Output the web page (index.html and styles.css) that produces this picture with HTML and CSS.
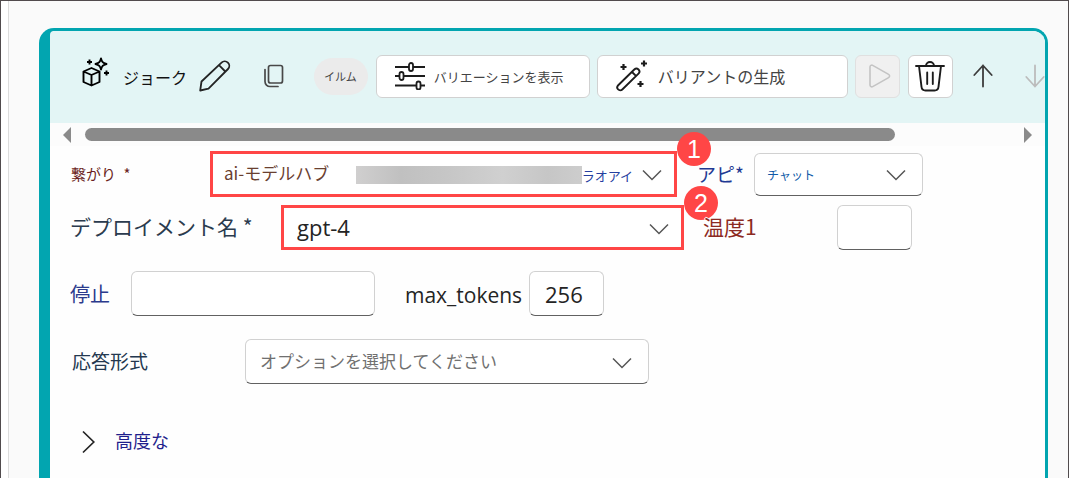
FILE: index.html
```html
<!DOCTYPE html>
<html lang="ja">
<head>
<meta charset="utf-8">
<title>ジョーク</title>
<link rel="stylesheet" href="styles.css">
</head>
<body>
<main class="frame">
  <section class="card">
    <header class="toolbar">
      <svg class="icon-model" width="28" height="30" viewBox="0 0 28 30" fill="none" stroke="#000" stroke-width="1.9" stroke-linejoin="round">
        <path d="M9.500 11 17.500 14.500v10.500L9.500 28.500 1.500 25V14.500ZM1.500 14.500l8 3.500 8-3.500M9.500 18v10.500"/>
        <path d="M19 1.500c.8 3.500 1.800 4.500 5.500 5.500-3.700 1-4.700 2-5.500 5.500-.8-3.500-1.800-4.500-5.500-5.500 3.700-1 4.700-2 5.500-5.500Z"/>
        <path d="M7.500 2.500v5M5 5h5M24.500 13.500v5M22 16h5"/>
      </svg>
      <h1 class="title">ジョーク</h1>
      <button class="plain plain-edit" aria-label="名前を編集">
        <svg width="32" height="32" viewBox="0 0 32 32" fill="none" stroke="#242424" stroke-width="1.8" stroke-linejoin="round"><path d="M1.200 30.500 2.500 21.500 22.500 2.700a4.500 4.500 0 0 1 6.500 6.300L9.500 28.700ZM20 5.200l6.300 6.300"/></svg>
      </button>
      <button class="plain plain-copy" aria-label="コピー">
        <svg width="22" height="24" viewBox="0 0 22 24" fill="none" stroke="#484848" stroke-width="1.7" stroke-linecap="round"><rect x="5.500" y="1.500" width="14" height="17.500" rx="2"/><path d="M2 5.500v12a5 5 0 0 0 5 5h8"/></svg>
      </button>
      <span class="chip">イルム</span>
      <button class="btn btn-show">
        <svg width="30" height="28" viewBox="0 0 30 28" fill="none" stroke="#1c1c1c" stroke-width="1.800"><path d="M0 5h14M18 5h12M0 14h4M9 14h21M0 23.500h21M26 23.500h4"/><rect x="14" y="1" width="4" height="8" rx="2"/><rect x="4.500" y="10" width="4" height="8" rx="2"/><rect x="21.500" y="19.500" width="4" height="8" rx="2"/></svg>
        <span>バリエーションを表示</span>
      </button>
      <button class="btn btn-generate">
        <svg width="32" height="32" viewBox="0 0 32 32" fill="none" stroke="#1c1c1c" stroke-width="1.900"><path d="M2.200 25.300 18.300 9.500a2.900 2.900 0 0 1 4.200 4.200L6.300 29.500a2.900 2.900 0 0 1-4.100-4.200ZM16 12l4.200 4.200"/><path stroke-width="2.200" d="M7.500 4v6M4.500 7h6M28 .5v6M25 3.500h6M24.500 21v6M21.500 24h6"/></svg>
        <span>バリアントの生成</span>
      </button>
      <button class="btn btn-square" disabled aria-label="実行">
        <svg class="icon-play" width="24" height="26" viewBox="0 0 24 26" fill="none" stroke="#c4c4c4" stroke-width="1.600" stroke-linejoin="round"><path d="M2 4a1.800 1.800 0 0 1 2.700-1.600L20.600 11.400a1.800 1.800 0 0 1 0 3.200L4.700 23.600A1.800 1.800 0 0 1 2 22Z"/></svg>
      </button>
      <button class="btn btn-square btn-delete" aria-label="削除">
        <svg width="30" height="32" viewBox="0 0 30 32" fill="none" stroke="#1c1c1c" stroke-width="1.900" stroke-linecap="round"><path d="M1 6h28M11 6a4 4 0 0 1 8 0M4 6l2.500 20.800A4 4 0 0 0 10.500 30.500h9a4 4 0 0 0 4-3.700L26 6M12.200 12.500v11.500M17.800 12.500v11.500"/></svg>
      </button>
      <button class="plain plain-up" aria-label="上へ移動">
        <svg width="20" height="24" viewBox="0 0 20 24" fill="none" stroke="#3c3c3c" stroke-width="1.800" stroke-linecap="round" stroke-linejoin="round"><path d="M10 22.500v-21M1.300 11 10 1.500 18.700 11"/></svg>
      </button>
      <button class="plain plain-down" disabled aria-label="下へ移動">
        <svg width="20" height="24" viewBox="0 0 20 24" fill="none" stroke="#bcbcbc" stroke-width="1.800" stroke-linecap="round" stroke-linejoin="round"><path d="M10 1.500v21M1.300 13 10 22.500 18.700 13"/></svg>
      </button>
    </header>
    <div class="scroller">
      <svg width="8" height="16" viewBox="0 0 8 16" fill="#8a8a8a"><path d="M8 0v16L0 8Z"/></svg>
      <div class="track"><div class="thumb"></div></div>
      <svg width="8" height="16" viewBox="0 0 8 16" fill="#8a8a8a"><path d="M0 0v16l8-8Z"/></svg>
    </div>
    <form class="form">
      <div class="row row-connection">
        <label class="label label-connection" for="connection">繋がり <span class="required">*</span></label>
        <div class="picker highlight">
          <select id="connection" class="field field-connection"><option>ai-モデルハブ</option></select>
          <div class="masked"><span class="mosaic"></span><span class="suffix">ラオアイ</span></div>
          <svg class="chevron" width="20" height="12" viewBox="0 0 20 12"><path d="M1 1.500 10 10.500 19 1.500"/></svg>
          <span class="badge">1</span>
        </div>
        <label class="label label-api" for="api">アピ*</label>
        <div class="picker">
          <select id="api" class="field field-api"><option>チャット</option></select>
          <svg class="chevron" width="20" height="12" viewBox="0 0 20 12"><path d="M1 1.500 10 10.500 19 1.500"/></svg>
        </div>
      </div>
      <div class="row row-deployment">
        <label class="label label-deployment" for="deployment">デプロイメント名 *</label>
        <div class="picker highlight">
          <select id="deployment" class="field field-latin"><option>gpt-4</option></select>
          <svg class="chevron" width="20" height="12" viewBox="0 0 20 12"><path d="M1 1.500 10 10.500 19 1.500"/></svg>
          <span class="badge">2</span>
        </div>
        <label class="label label-temperature" for="temperature">温度1</label>
        <input id="temperature" class="field" type="text">
      </div>
      <div class="row row-stop">
        <label class="label label-stop" for="stop">停止</label>
        <input id="stop" class="field" type="text">
        <label class="label label-tokens" for="tokens">max_tokens</label>
        <input id="tokens" class="field field-latin" type="text" value="256">
      </div>
      <div class="row row-format">
        <label class="label label-format" for="format">応答形式</label>
        <div class="picker">
          <select id="format" class="field field-format"><option>オプションを選択してください</option></select>
          <svg class="chevron" width="20" height="12" viewBox="0 0 20 12"><path d="M1 1.500 10 10.500 19 1.500"/></svg>
        </div>
      </div>
      <button class="advanced" type="button">
        <svg width="13" height="24" viewBox="0 0 13 24" fill="none" stroke="#242424" stroke-width="1.700"><path d="M1 1.500 11.800 12 1 22.500"/></svg>
        <span class="advanced-text">高度な</span>
      </button>
    </form>
  </section>
</main>
</body>
</html>
```
FILE: styles.css
```css
* { box-sizing: border-box; }

body {
  margin: 0;
  background: #fff;
  color: #242424;
  font-family: "Noto Sans CJK JP", sans-serif;
}

button, input, select { font-family: inherit; }
svg { flex: none; display: block; }

.frame {
  display: flex;
  min-height: 100vh;
  padding: 27px 20px 0 38px;
  border: 1px solid #514b4d;
  background: linear-gradient(to right, #fff 7px, #dcdcdc 7px, #dcdcdc 8px, #fafafa 8px);
}

.card {
  flex: 1;
  min-width: 0;
  border: 3px solid #02a5b0;
  border-left-width: 11px;
  border-bottom: 0;
  border-radius: 15px 15px 0 0;
  background: #fefefe;
}

.toolbar {
  display: flex;
  align-items: center;
  height: 92px;
  padding: 0 0 2px 32px;
  overflow: hidden;
  border-radius: 4px 12px 0 0;
  background: #e3f5f5;
}
.toolbar > * { flex: none; }

.icon-model { margin-bottom: 8px; }
.title {
  margin: 0 0 0 13px;
  padding-top: 2px;
  color: #111;
  font-size: 16px;
  font-weight: 400;
  line-height: 24px;
}

.plain {
  display: flex;
  padding: 0;
  border: 0;
  background: none;
}
.plain-edit { margin-left: 12px; }
.plain-copy { margin-left: 32px; }
.plain-up { margin-left: 20px; }
.plain-down { margin-left: 32px; }

.chip {
  margin: 0 8px 0 29px;
  padding: 0 11px 0 10px;
  border-radius: 19px;
  background: #ebebeb;
  color: #444;
  font-size: 11px;
  line-height: 37px;
}

.btn {
  display: flex;
  align-items: center;
  height: 43px;
  margin-right: 7px;
  border: 1px solid #d1d1d1;
  border-radius: 6px;
  background: #fff;
  color: #444;
}
.btn-show { width: 214px; padding: 0 18px; gap: 9px; font-size: 13px; }
.btn-generate { width: 251px; padding: 0 18px; gap: 10px; font-size: 16px; }
.btn-square { width: 45px; padding: 0; justify-content: center; margin-right: 8px; }
.btn-square:disabled { background: #f0f0f0; border-color: #e0e0e0; }
.icon-play { margin-left: 6px; }
.btn-square.btn-delete { margin-right: 0; }

.scroller {
  display: flex;
  align-items: center;
  gap: 14px;
  height: 23px;
  padding: 0 13px;
  background: #fcfcfc;
}
.track { flex: 1; }
.thumb {
  width: 87.6%;
  height: 13px;
  border-radius: 7px;
  background: #8a8a8a;
}

.form { padding: 5px 0 24px 20px; }

.row { display: grid; align-items: center; }
.row-connection {
  grid-template-columns: 140px minmax(0, 467fr) 77px minmax(0, 169fr) minmax(0, 122fr);
}
.row-deployment {
  grid-template-columns: 211px minmax(0, 403fr) 153px 75px minmax(0, 133fr);
  margin-top: 8px;
}
.row-stop {
  grid-template-columns: 61px minmax(0, 244fr) 154px 75px minmax(0, 441fr);
  margin-top: 21px;
}
.row-format {
  grid-template-columns: 175px minmax(0, 404fr) minmax(0, 396fr);
  margin-top: 23px;
}

.label { white-space: nowrap; line-height: 30px; }
.label-connection { padding-left: 1px; font-size: 15px; color: #6b1f22; }
.required { padding-left: 4px; }
.label-api { padding-left: 20px; font-size: 19px; color: #1f3a93; }
.label-deployment { padding-bottom: 4px; font-size: 21px; color: #2b3b4e; }
.label-temperature {
  z-index: 2;
  padding: 0 0 4px 19px;
  font-size: 21px;
  color: #8c2a22;
  text-shadow: 1px 0 #fff, -1px 0 #fff, 0 1px #fff, 0 -1px #fff;
}
.label-stop { font-size: 20px; color: #2b3a8c; }
.label-tokens { padding: 2px 0 0 30px; font-family: "Open Sans", sans-serif; font-size: 21px; }
.label-format { padding: 0 0 2px 2px; font-size: 19px; color: #24384f; }

.field {
  appearance: none;
  display: block;
  width: 100%;
  height: 45px;
  padding: 0 15px;
  border: 1px solid #d1d1d1;
  border-bottom-color: #616161;
  border-radius: 6px;
  background: #fff;
  color: #242424;
}
.field-api { height: 43px; padding: 0 12px; font-size: 12px; color: #0f5aa8; }
.field-latin { font-family: "Open Sans", sans-serif; font-size: 22px; }
.field-format { padding: 0 14px 3px; font-size: 17px; color: #707070; }

.picker { position: relative; }
.chevron {
  position: absolute;
  top: calc(50% - 5px);
  right: 17px;
  fill: none;
  stroke: #565656;
  stroke-width: 1.5;
  pointer-events: none;
}

.highlight { border: 3px solid #ff4646; }
.highlight .field { height: 39px; border-color: #fff; padding: 0 12px 2px; }
.highlight .field-connection { height: 40px; padding: 0 10px 3px; font-size: 17px; color: #6a4030; }
.highlight .chevron { right: 12px; }

.masked {
  position: absolute;
  top: 0;
  bottom: 0;
  left: 143px;
  right: 41px;
  display: flex;
  align-items: center;
  padding-top: 2px;
  pointer-events: none;
}
.mosaic {
  flex: 1;
  height: 18px;
  background: linear-gradient(to right, #d0cfcf, #c0c0c0 20%, #c6c6c6 40%, #d0d0d0 65%, #c6c6c6 85%, #cdcdcd);
}
.suffix { color: #2540a0; font-size: 13px; }

.badge {
  position: absolute;
  top: -22px;
  left: 100%;
  z-index: 1;
  width: 34px;
  margin-left: 3px;
  border-radius: 50%;
  background: #ff4646;
  color: #fff;
  font-family: "Liberation Sans", sans-serif;
  font-size: 25px;
  line-height: 34px;
  text-align: center;
}

.advanced {
  display: flex;
  align-items: center;
  gap: 20px;
  margin: 43px 0 0 12px;
  padding: 0;
  border: 0;
  background: none;
  color: #1f1f8c;
  font-size: 18px;
}
.advanced-text { padding-bottom: 3px; }
```
